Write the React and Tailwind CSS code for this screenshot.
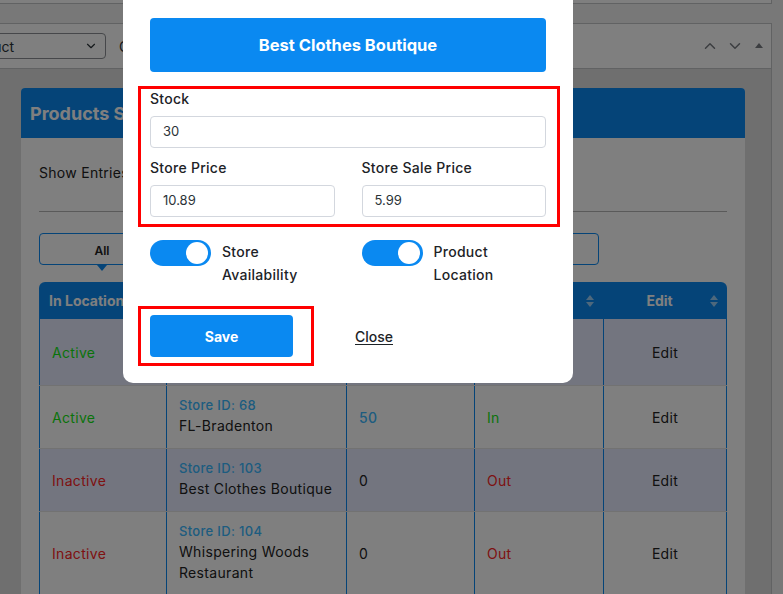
import React from "react";
import { ChevronUp, ChevronDown } from "lucide-react";

// Background table data (the page behind the modal)
const rows = [
    { status: "Active", storeId: 57, name: "FL-Sarasota", stock: "30", inStock: true },
    { status: "Active", storeId: 68, name: "FL-Bradenton", stock: "50", inStock: true },
    { status: "Inactive", storeId: 103, name: "Best Clothes Boutique", stock: "0", inStock: false },
    { status: "Inactive", storeId: 104, name: "Whispering Woods Restaurant", stock: "0", inStock: false },
];

const COLS = "grid grid-cols-[128px_180px_128px_129px_123px]";

function SortIcon() {
    return (
        <svg width="8" height="12" viewBox="0 0 8 12" className="text-white/60">
            <path d="M4 0 L8 5 L0 5 Z" fill="currentColor" />
            <path d="M4 12 L8 7 L0 7 Z" fill="currentColor" />
        </svg>
    );
}

function HeaderCell({ children, center, last }) {
    return (
        <div
            className={`relative flex items-center h-[37px] px-[10px] font-bold text-[14px] text-white ${
                last ? "" : "border-r border-[#0a89f1]"
            } ${center ? "justify-center pr-[22px]" : ""}`}
        >
            {children}
            <span className="absolute right-[9px] top-1/2 -translate-y-1/2">
                <SortIcon />
            </span>
        </div>
    );
}

function TableRow({ row, shaded, first }) {
    const cell = "flex flex-col justify-center px-[12px] py-[12px] border-r border-[#0a89f1]";
    return (
        <div
            className={`${COLS} ${first ? "min-h-[67px]" : "min-h-[63px]"} border-b border-[#e5e5e5] tracking-[0.02em] ${
                shaded ? "bg-[#e6ebfe]" : "bg-white"
            }`}
        >
            <div className={`${cell} border-l`}>
                <span className={`text-[14px] ${row.status === "Active" ? "text-[#14e614]" : "text-[#fc2424]"}`}>
                    {row.status}
                </span>
            </div>
            <div className={cell}>
                <span className="text-[13px] font-medium leading-[15px] text-[#3ab8ff]">Store ID: {row.storeId}</span>
                <span className="text-[14px] leading-[21px] mt-[2px] text-[#222]">{row.name}</span>
            </div>
            <div className={cell}>
                <span className={`text-[14px] ${row.stock !== "0" ? "text-[#3ab8ff] font-medium" : "text-[#222]"}`}>
                    {row.stock}
                </span>
            </div>
            <div className={cell}>
                <span className={`text-[14px] ${row.inStock ? "text-[#14e614]" : "text-[#fc2424]"}`}>
                    {row.inStock ? "In" : "Out"}
                </span>
            </div>
            <div className={`${cell} items-center`}>
                <span className="text-[14px] text-[#222]">Edit</span>
            </div>
        </div>
    );
}

function Toggle({ label1, label2 }) {
    return (
        <div className="flex items-start gap-[11px]">
            <div className="relative w-[61px] h-[26px] rounded-full bg-[#0a89f1] shrink-0">
                <div className="absolute right-[3px] top-[2px] w-[22px] h-[22px] rounded-full bg-white" />
            </div>
            <div className="text-[14px] font-medium leading-[23px] tracking-[0.02em] text-[#1d2327]">
                <div>{label1}</div>
                <div>{label2}</div>
            </div>
        </div>
    );
}

function Field({ label, value }) {
    return (
        <div className="flex flex-col">
            <label className="text-[14px] font-medium leading-[20px] tracking-[0.02em] text-[#1d2327]">{label}</label>
            <div className="mt-[7px] h-[32px] rounded-[4px] border border-[#d3d7de] px-[12px] flex items-center text-[13px] text-[#2c3338]">
                {value}
            </div>
        </div>
    );
}

export default function App() {
    return (
        <div className="relative w-[783px] h-[594px] overflow-hidden bg-[#f0f0f1] font-['Inter',sans-serif]">
            {/* page behind the modal */}
            <div className="w-[772px] h-[4px] bg-white border-b border-r border-[#c3c4c7]" />
            <div className="mt-[19px] w-[772px] border-r border-[#c3c4c7]">
                <div className="h-[46px] bg-white border-y border-[#c3c4c7] flex items-center">
                    <div className="-ml-[92px] w-[198px] h-[26px] rounded-[4px] border border-[#8c8f94] flex items-center justify-between pl-[8px] pr-[7px] text-[14px] text-[#2c3338]">
                        <span>Select Product</span>
                        <ChevronDown size={14} strokeWidth={2} className="text-[#2c3338]" />
                    </div>
                    <span className="ml-[13px] text-[14px] text-[#2c3338]">Choose a location</span>
                    <div className="ml-auto flex items-center gap-[7px] pr-[7px] text-[#787c82]">
                        <ChevronUp size={18} strokeWidth={2} />
                        <ChevronDown size={18} strokeWidth={2} />
                        <svg width="10" height="10" viewBox="0 0 10 10" className="ml-[3px]">
                            <path d="M5 2 L9 7 L1 7 Z" fill="currentColor" />
                        </svg>
                    </div>
                </div>
                <div className="bg-[#dedede] pt-[19px] pl-[21px] pr-[27px]">
                    <div className="w-[724px] bg-white rounded-t-[4px]">
                        <div className="h-[50px] bg-[#0a89f1] rounded-t-[4px] flex items-center pl-[9px] text-[18px] font-bold text-white">
                            Products Stock by Location
                        </div>
                        <div className="px-[18px] pb-[40px]">
                            <div className="pt-[24px] text-[14px] leading-[22px] tracking-[0.02em] text-[#222]">Show Entries</div>
                            <div className="mt-[27px] border-t border-[#b4b4b4]" />
                            <div className="mt-[21px] w-[560px] h-[32px] rounded-[4px] border border-[#0a89f1] flex">
                                <div className="relative w-[124px] flex items-center justify-center pt-[3px] text-[12px] font-semibold text-[#222]">
                                    All
                                    <span className="absolute -bottom-[7px] left-1/2 -translate-x-1/2 w-0 h-0 border-x-[5px] border-x-transparent border-t-[6px] border-t-[#0a89f1]" />
                                </div>
                                <div className="flex-1 flex items-center justify-center text-[12px] font-semibold text-[#222]">In Location</div>
                            </div>
                            <div className="mt-[17px]">
                                <div className={`${COLS} bg-[#0a89f1] rounded-t-[6px]`}>
                                    <HeaderCell>In Location</HeaderCell>
                                    <HeaderCell>Store</HeaderCell>
                                    <HeaderCell>Stock</HeaderCell>
                                    <HeaderCell>Status</HeaderCell>
                                    <HeaderCell center last>Edit</HeaderCell>
                                </div>
                                {rows.map((row, i) => (
                                    <TableRow key={row.storeId} row={row} shaded={i % 2 === 0} first={i === 0} />
                                ))}
                            </div>
                        </div>
                    </div>
                </div>
            </div>

            {/* backdrop */}
            <div className="absolute inset-0 bg-black/50" />

            {/* modal */}
            <div className="absolute left-[123px] top-0 w-[450px] bg-white rounded-b-[10px] pl-[15px] pr-[13px] pt-[18px] pb-[17px]">
                <div className="ml-[12px] mr-[14px] h-[54px] rounded-[4px] bg-[#0a89f1] flex items-center justify-center text-[16.5px] font-bold text-white">
                    Best Clothes Boutique
                </div>
                <div className="mt-[14px] border-[3px] border-[#ff0000] pl-[9px] pr-[11px] pt-0 pb-[7px]">
                    <Field label="Stock" value="30" />
                    <div className="mt-[10px] grid grid-cols-2 gap-x-[27px]">
                        <Field label="Store Price" value="10.89" />
                        <Field label="Store Sale Price" value="5.99" />
                    </div>
                </div>
                <div className="mt-[13px] ml-[12px] mr-[14px] grid grid-cols-2 gap-x-[27px]">
                    <Toggle label1="Store" label2="Availability" />
                    <Toggle label1="Product" label2="Location" />
                </div>
                <div className="mt-[20px] flex items-center">
                    <div className="border-[3px] border-[#ff0000] pl-[9px] pr-[18px] pt-[6px] pb-[6px]">
                        <button className="w-[143px] h-[42px] rounded-[4px] bg-[#0a89f1] text-white text-[14px] font-bold">
                            Save
                        </button>
                    </div>
                    <button className="ml-[41px] text-[14px] font-medium underline underline-offset-2 text-[#1d2327]">
                        Close
                    </button>
                </div>
            </div>
        </div>
    );
}
